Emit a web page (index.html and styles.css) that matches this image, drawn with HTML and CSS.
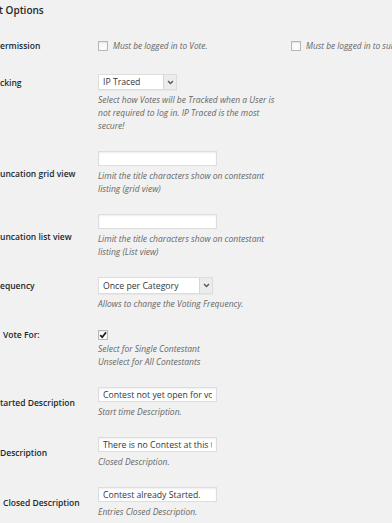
FILE: index.html
```html
<!DOCTYPE html>
<html>
<head>
<meta charset="utf-8">
<link rel="stylesheet" href="styles.css">
</head>
<body>
<div class="page">
  <h2 class="title">t Options</h2>
  <div class="form">
    <div class="row row-check row-first">
      <div class="label">ermission</div>
      <div class="field field-inline">
        <label class="check check-wide"><span class="box"></span><span class="check-text">Must be logged in to Vote.</span></label>
        <label class="check"><span class="box"></span><span class="check-text">Must be logged in to submit entries.</span></label>
      </div>
    </div>

    <div class="row row-select">
      <div class="label">cking</div>
      <div class="field">
        <div class="select select-sm"><select><option>IP Traced</option></select><span class="arrow"><svg width="7" height="5" viewBox="0 0 7 5"><path d="M1 1l2.5 2.5L6 1" fill="none" stroke="#555" stroke-width="1.3"/></svg></span></div>
        <p class="desc">Select how Votes will be Tracked when a User is not required to log in. IP Traced is the most secure!</p>
      </div>
    </div>

    <div class="row row-mid">
      <div class="label">uncation grid view</div>
      <div class="field">
        <input class="text" type="text" value="">
        <p class="desc">Limit the title characters show on contestant listing (grid view)</p>
      </div>
    </div>

    <div class="row row-mid">
      <div class="label">uncation list view</div>
      <div class="field">
        <input class="text" type="text" value="">
        <p class="desc">Limit the title characters show on contestant listing (List view)</p>
      </div>
    </div>

    <div class="row row-select">
      <div class="label">equency</div>
      <div class="field">
        <div class="select select-md"><select><option>Once per Category</option></select><span class="arrow"><svg width="7" height="5" viewBox="0 0 7 5"><path d="M1 1l2.5 2.5L6 1" fill="none" stroke="#555" stroke-width="1.3"/></svg></span></div>
        <p class="desc">Allows to change the Voting Frequency.</p>
      </div>
    </div>

    <div class="row row-check row-vote">
      <div class="label label-indent">Vote For:</div>
      <div class="field">
        <span class="box box-checked"><svg width="8" height="8" viewBox="0 0 8 8"><path d="M1.2 4.2L3.2 6.2L7 1.4" fill="none" stroke="#1e1e1e" stroke-width="1.7"/></svg></span>
        <p class="desc desc-tight">Select for Single Contestant<br>Unselect for All Contestants</p>
      </div>
    </div>

    <div class="row row-mid">
      <div class="label">tarted Description</div>
      <div class="field">
        <input class="text" type="text" value="Contest not yet open for voting.">
        <p class="desc">Start time Description.</p>
      </div>
    </div>

    <div class="row row-mid">
      <div class="label">Description</div>
      <div class="field">
        <input class="text" type="text" value="There is no Contest at this time.">
        <p class="desc">Closed Description.</p>
      </div>
    </div>

    <div class="row row-mid">
      <div class="label label-indent">Closed Description</div>
      <div class="field">
        <input class="text" type="text" value="Contest already Started.">
        <p class="desc">Entries Closed Description.</p>
      </div>
    </div>
  </div>
</div>
</body>
</html>
```

FILE: styles.css
```css
html, body {
  margin: 0;
  padding: 0;
}
body {
  background: #f1f1f1;
  font-family: "Open Sans", "DejaVu Sans", sans-serif;
  color: #23282d;
  width: 392px;
  height: 523px;
  overflow: hidden;
}
.page {
  width: 392px;
}
.title {
  font-size: 10px;
  font-weight: 600;
  line-height: 15px;
  margin: 3px 0 13px -1px;
  white-space: nowrap;
}
.row {
  display: flex;
  padding: 10px 0 9px;
}
.row-first {
  padding-bottom: 13px;
}
.row-vote {
  padding-top: 11px;
}
.label {
  width: 98px;
  flex-shrink: 0;
  font-size: 8.5px;
  font-weight: 600;
  white-space: nowrap;
  overflow: visible;
}
.label-indent {
  padding-left: 3px;
  box-sizing: border-box;
}
.row-check .label {
  line-height: 10px;
}
.row-select .label {
  line-height: 17px;
}
.row-mid .label {
  align-self: center;
  line-height: 13px;
}
.field {
  display: flex;
  flex-direction: column;
  align-items: flex-start;
}
.field-inline {
  flex-direction: row;
  align-items: center;
  white-space: nowrap;
}
.check {
  display: flex;
  align-items: center;
  flex-shrink: 0;
}
.check-wide {
  width: 193px;
}
.check-text {
  font-size: 8.3px;
  font-style: italic;
  color: #666;
  line-height: 10px;
  margin-left: 5px;
}
.box {
  width: 10px;
  height: 10px;
  box-sizing: border-box;
  border: 1px solid #b4b9be;
  background: #fbfbfb;
  box-shadow: inset 0 1px 2px rgba(0, 0, 0, 0.1);
  display: inline-flex;
  align-items: center;
  justify-content: center;
  flex-shrink: 0;
}
.box-checked {
  background: #fff;
}
.desc {
  margin: 3px 0 0;
  width: 190px;
  font-size: 8.5px;
  font-style: italic;
  color: #666;
  line-height: 13px;
}
.desc-tight {
  margin-top: 2px;
}
.text {
  width: 119px;
  height: 15px;
  box-sizing: border-box;
  margin: 0;
  border: 1px solid #ddd;
  background: #fff;
  box-shadow: inset 0 1px 2px rgba(0, 0, 0, 0.07);
  font-family: "Open Sans", sans-serif;
  font-size: 8.7px;
  padding: 0 4px;
  color: #32373c;
  outline: none;
}
.select {
  display: inline-flex;
  height: 16px;
  box-sizing: border-box;
  border: 1px solid #ddd;
  background: #fff;
  box-shadow: 0 1px 1px rgba(0, 0, 0, 0.04);
}
.select-sm {
  width: 79px;
}
.select-md {
  width: 115px;
  height: 17px;
}
.select select {
  appearance: none;
  -webkit-appearance: none;
  border: 0;
  margin: 0;
  background: transparent;
  font-family: "Open Sans", sans-serif;
  font-size: 8.7px;
  padding: 0 4px;
  flex: 1;
  min-width: 0;
  color: #32373c;
  outline: none;
}
.select .arrow {
  width: 12px;
  flex-shrink: 0;
  background: #ececec;
  border-left: 1px solid #d6d6d6;
  display: flex;
  align-items: center;
  justify-content: center;
}
```
